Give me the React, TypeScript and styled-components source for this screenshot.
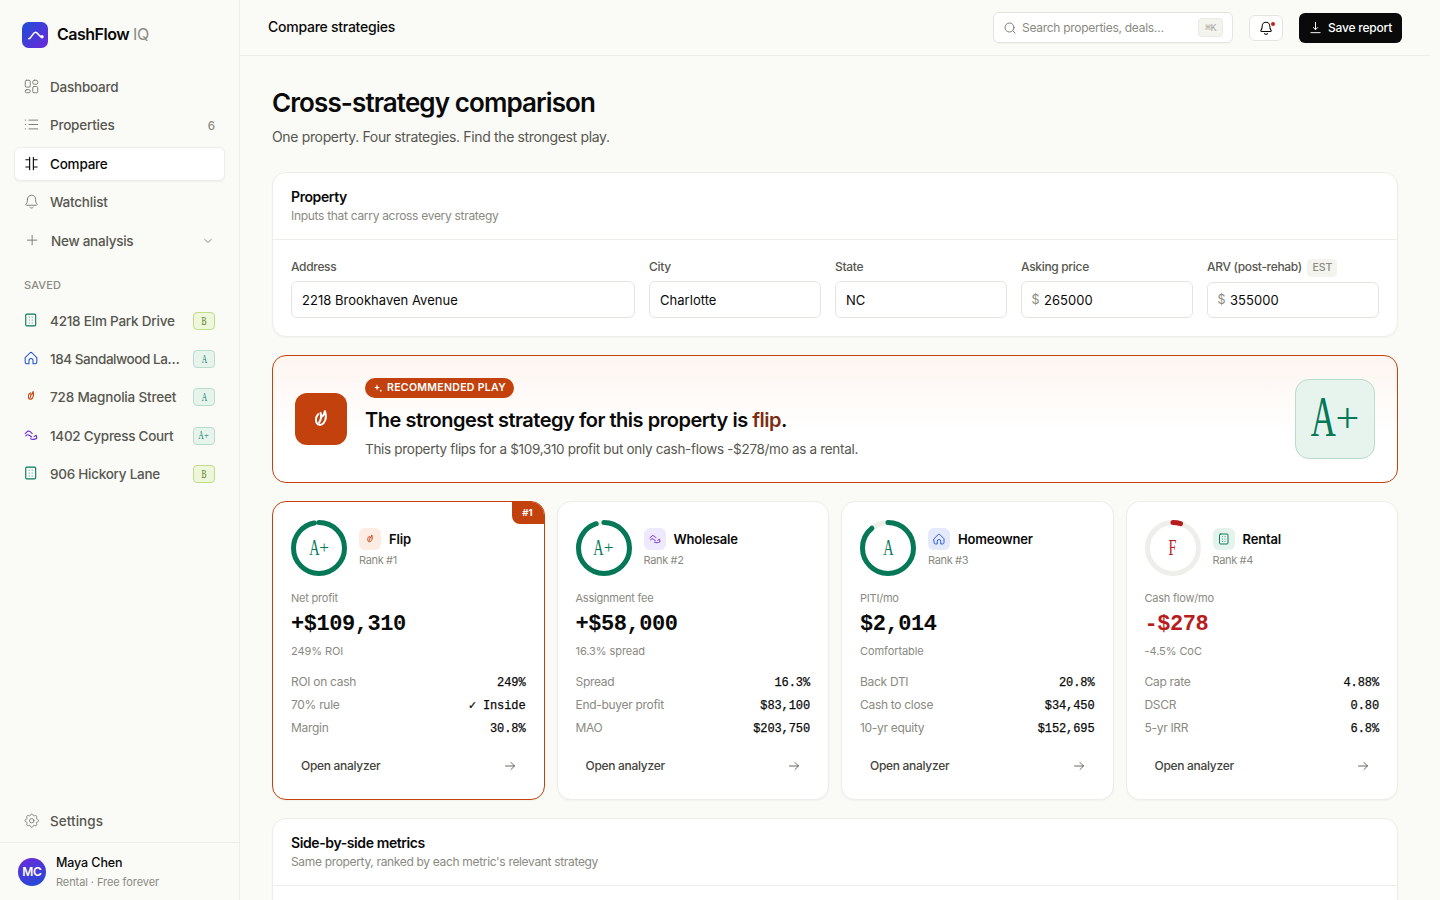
import React from "react";
import styled, { createGlobalStyle } from "styled-components";

const sans = `Inter, "Liberation Sans", sans-serif`;
const mono = `"Liberation Mono", monospace`;
const serif = `"Liberation Serif", serif`;

const c = {
  bg: "#fafaf7",
  ink: "#0a0a0a",
  mid: "#57574f",
  soft: "#8a8a82",
  line: "#ededea",
  field: "#e5e5e0",
  green: "#047857",
  red: "#b91c1c",
  orange: "#c2410c",
  purple: "#6d28d9",
  blue: "#1d4ed8",
};

const Global = createGlobalStyle`
  * { box-sizing: border-box; }
  html, body { margin: 0; padding: 0; }
  body {
    font-family: ${sans};
    color: ${c.ink};
    background: ${c.bg};
    height: 900px;
    overflow: hidden;
  }
  svg { display: block; flex: none; }
`;

const Text = styled.span<{ $size: number; $weight?: number; $color?: string; $ls?: number; $lh?: number }>`
  display: block;
  white-space: nowrap;
  font-size: ${(p) => p.$size}px;
  font-weight: ${(p) => p.$weight ?? 400};
  color: ${(p) => p.$color ?? c.ink};
  letter-spacing: ${(p) => p.$ls ?? 0}px;
  line-height: ${(p) => p.$lh ?? 20}px;
`;

/* ---------- icons ---------- */

type IconProps = { size: number; width?: number; color?: string; children: React.ReactNode };
const Icon = ({ size, width = 1.5, color = "currentColor", children }: IconProps) => (
  <svg width={size} height={size} viewBox="0 0 24 24" fill="none" stroke={color} strokeWidth={width} strokeLinecap="round" strokeLinejoin="round">
    {children}
  </svg>
);

const DashboardIcon = () => (
  <Icon size={15}>
    <rect x="2" y="2" width="8" height="11" rx="2" />
    <rect x="14" y="2" width="8" height="6.5" rx="2.6" />
    <rect x="2" y="17" width="8" height="5" rx="2.4" />
    <rect x="14" y="12" width="8" height="10" rx="2" />
  </Icon>
);
const ListIcon = () => (
  <Icon size={15}>
    <path d="M8 5h14M8 12h14M8 19h14M2 5h.5M2 12h.5M2 19h.5" />
  </Icon>
);
const CompareIcon = () => (
  <Icon size={15} width={1.8}>
    <path d="M9 2v20M15 2v20M3 6h6M3 17.500h6M15 6h6M15 17.500h6" />
  </Icon>
);
const BellIcon = ({ size = 15, width = 1.5 }: { size?: number; width?: number }) => (
  <Icon size={size} width={width}>
    <path d="M5.500 8.500a6.500 6.500 0 0 1 13 0c0 4.500.8 5.700 2 7.200.9 1.200.4 2.300-1 2.300h-15c-1.400 0-1.900-1.100-1-2.300 1.200-1.500 2-2.700 2-7.200Z" />
    <path d="M9.500 21.500c1.400 1.300 3.600 1.300 5 0" />
  </Icon>
);
const PlusIcon = () => (
  <Icon size={15}>
    <path d="M13 5.500v15M5.500 13h15" />
  </Icon>
);
const ChevronIcon = () => (
  <Icon size={10} width={2}>
    <path d="m4 8 8 7.500L20 8" />
  </Icon>
);
const GearIcon = () => (
  <Icon size={15.5} width={1.4}>
    <circle cx="12" cy="12" r="3.400" />
    <path d="M10.200 2.600a2 2 0 0 1 3.600 0l.5 1.100a1.300 1.300 0 0 0 1.700.7l1.100-.4a2 2 0 0 1 2.600 2.600l-.4 1.100a1.300 1.300 0 0 0 .7 1.700l1.100.5a2 2 0 0 1 0 3.800l-1.100.5a1.300 1.300 0 0 0-.7 1.700l.4 1.100a2 2 0 0 1-2.600 2.600l-1.100-.4a1.300 1.300 0 0 0-1.700.7l-.5 1.100a2 2 0 0 1-3.600 0l-.5-1.100a1.300 1.300 0 0 0-1.700-.7l-1.100.4a2 2 0 0 1-2.600-2.600l.4-1.100a1.300 1.300 0 0 0-.7-1.700l-1.100-.5a2 2 0 0 1 0-3.800l1.100-.5a1.300 1.300 0 0 0 .7-1.700l-.4-1.100a2 2 0 0 1 2.600-2.600l1.100.4a1.300 1.300 0 0 0 1.700-.7Z" />
  </Icon>
);
const SearchIcon = () => (
  <Icon size={12} width={1.9}>
    <circle cx="11" cy="11" r="9" />
    <path d="m17.700 17.700 4.500 4.500" />
  </Icon>
);
const DownloadIcon = () => (
  <Icon size={13} width={1.8}>
    <path d="M12 2.500v13M8 12l4 4 4-4M3.500 21.500h17" />
  </Icon>
);
const ArrowIcon = () => (
  <Icon size={12} width={1.6}>
    <path d="M3 12h18M14 5l7 7-7 7" />
  </Icon>
);
const BuildingIcon = ({ size }: { size: number }) => (
  <Icon size={size} width={1.9} color={c.green}>
    <rect x="3" y="2" width="17" height="20" rx="2" />
    <path strokeWidth="1.300" d="M9 7v.3M14 7v.3M9 12v.3M14 12v.3M9 17v.3M14 17v.3" />
  </Icon>
);
const HomeIcon = ({ size }: { size: number }) => (
  <Icon size={size} width={1.8} color={c.blue}>
    <path d="M2 11.500 10.500 3a2.200 2.200 0 0 1 3 0L22 11.500V19a3 3 0 0 1-3 3h-3.500v-5.500a3.500 3.500 0 0 0-7 0V22H5a3 3 0 0 1-3-3Z" />
  </Icon>
);
const FlameIcon = ({ size, color = c.orange }: { size: number; color?: string }) => (
  <Icon size={size} width={1.9} color={color}>
    <path d="M9.500 7.500C7.600 9.500 7 13 7.800 15.400c1.300 2.800 4.900 2.900 7-.2 2.200-3.300 2-7 .9-10.400" />
    <path d="M15.500 5c-.3 2-1 3.500-2.200 4.500" />
    <path d="M11.600 6.500c1 3 .5 6-1.400 9" />
  </Icon>
);
const DealIcon = ({ size }: { size: number }) => (
  <Icon size={size} width={1.9} color={c.purple}>
    <path d="M2 9.500 7 5l4 1.500 3 3M3 13.500c2-2 4-2.500 6-1l4 3M11 18.500c3.500 1.500 7 1.500 11-1l-1-5-3.500 2" />
  </Icon>
);
const SparkIcon = () => (
  <svg width="10" height="10" viewBox="0 0 10 10" fill="#fff">
    <path d="M4 1.300 4.800 3.700 7 4.500 4.800 5.300 4 7.500 3.200 5.300 1 4.500 3.200 3.700Z" />
    <circle cx="7.700" cy="7.700" r=".9" />
  </svg>
);

const strategyIcon = {
  rental: (s: number) => <BuildingIcon size={s} />,
  home: (s: number) => <HomeIcon size={s} />,
  flip: (s: number) => <FlameIcon size={s} />,
  deal: (s: number) => <DealIcon size={s} />,
};
type Kind = keyof typeof strategyIcon;

/* ---------- shell ---------- */

const Shell = styled.div`
  display: grid;
  grid-template-columns: 240px 1190px;
  height: 900px;
  overflow: hidden;
`;
const Sidebar = styled.aside`
  display: flex;
  flex-direction: column;
  border-right: 1px solid ${c.line};
  padding-top: 22px;
  height: 900px;
`;
const Brand = styled.div`
  display: flex;
  align-items: center;
  gap: 9px;
  height: 26px;
  padding-left: 22px;
  margin-bottom: 22.500px;
`;
const Wordmark = styled.div`
  display: flex;
  gap: 4px;
  padding-bottom: 2px;
`;
const Nav = styled.nav`
  display: flex;
  flex-direction: column;
  gap: 4px;
  padding: 0 14px;
`;
const NavRow = styled.div<{ $active?: boolean }>`
  display: flex;
  align-items: center;
  height: 34.250px;
  padding: 0 9px;
  border-radius: 6px;
  color: ${(p) => (p.$active ? c.ink : "#7a7a72")};
  background: ${(p) => (p.$active ? "#fff" : "transparent")};
  border: 1px solid ${(p) => (p.$active ? c.line : "transparent")};
  box-shadow: ${(p) => (p.$active ? "0 1px 2px rgba(0,0,0,.05)" : "none")};
`;
const IconSlot = styled.div<{ $w?: number }>`
  width: ${(p) => p.$w ?? 26}px;
  padding-bottom: 2px;
`;
const Grow = styled.div`
  flex: 1;
  min-width: 0;
`;
const ChevronSlot = styled.div`
  padding-right: 2px;
`;
const SavedLabel = styled.div`
  padding: 17px 24px 9px;
`;
const gradeTone = {
  A: { fg: c.green, bg: "#e7f4ee", line: "#b9dccd" },
  B: { fg: "#4d7c0f", bg: "#eef6dc", line: "#bfdc86" },
};
const MiniGrade = styled.div<{ $tone: "A" | "B" }>`
  display: flex;
  align-items: center;
  justify-content: center;
  width: 22px;
  height: 18px;
  border-radius: 4px;
  border: 1px solid ${(p) => gradeTone[p.$tone].line};
  background: ${(p) => gradeTone[p.$tone].bg};
  color: ${(p) => gradeTone[p.$tone].fg};
`;
const GradeMark = styled.span<{ $size: number }>`
  display: flex;
  align-items: baseline;
  justify-content: center;
  font-family: ${serif};
  font-size: ${(p) => p.$size}px;
  line-height: 1;
  padding-bottom: 0.06em;
`;
const GradeLetter = styled.span`
  display: block;
  margin: 0 -0.14em;
  transform: scaleX(0.62);
`;
const GradeSign = styled.span`
  display: block;
  font-size: 0.75em;
  line-height: 1;
  transform: translateY(-0.1em);
`;
const Grade = ({ value, size }: { value: string; size: number }) => (
  <GradeMark $size={size}>
    <GradeLetter>{value[0]}</GradeLetter>
    {value[1] && <GradeSign>{value[1]}</GradeSign>}
  </GradeMark>
);
const SettingsNav = styled(Nav)`
  margin-top: auto;
  margin-bottom: 3.5px;
`;
const Account = styled.div`
  display: flex;
  align-items: center;
  gap: 10px;
  height: 58px;
  border-top: 1px solid ${c.line};
  padding-left: 18px;
`;
const Avatar = styled.div`
  display: flex;
  align-items: center;
  justify-content: center;
  width: 28px;
  height: 28px;
  border-radius: 50%;
  background: linear-gradient(160deg, #6d28d9, #1d4ed8);
`;
const AccountCopy = styled.div`
  display: flex;
  flex-direction: column;
  padding-top: 2px;
`;

/* ---------- header ---------- */

const Main = styled.main`
  display: flex;
  flex-direction: column;
  height: 900px;
  overflow: hidden;
`;
const Header = styled.header`
  display: flex;
  align-items: center;
  flex: none;
  gap: 16px;
  height: 56px;
  border-bottom: 1px solid ${c.line};
  padding: 0 28px;
`;
const HeaderTitle = styled.div`
  flex: 1;
  padding-bottom: 2px;
`;
const Search = styled.div`
  display: flex;
  align-items: center;
  gap: 6px;
  width: 240px;
  height: 31px;
  padding: 0 9px 0 10px;
  border: 1px solid ${c.field};
  border-radius: 6px;
  background: #fff;
  color: #77776f;
  box-shadow: 0 1px 1px rgba(0, 0, 0, 0.03);
`;
const Key = styled.div`
  display: flex;
  align-items: center;
  justify-content: center;
  width: 25px;
  height: 19px;
  border: 1px solid #ebebe5;
  border-radius: 4px;
  background: #f4f4ef;
  font: 10px ${mono};
  letter-spacing: -0.4px;
  color: #a9a9a0;
`;
const BellButton = styled.div`
  position: relative;
  display: flex;
  align-items: center;
  justify-content: center;
  width: 34px;
  height: 26px;
  border: 1px solid ${c.field};
  border-radius: 6px;
  background: #fff;
`;
const Dot = styled.i`
  position: absolute;
  right: 7px;
  top: 6px;
  width: 4px;
  height: 4px;
  border-radius: 50%;
  background: #c81e1e;
`;
const SaveButton = styled.div`
  display: flex;
  align-items: center;
  gap: 6px;
  width: 103px;
  height: 30px;
  padding-left: 10px;
  border-radius: 6px;
  background: ${c.ink};
  color: #fff;
`;

/* ---------- content ---------- */

const Content = styled.div`
  display: flex;
  flex-direction: column;
  padding: 30px 32px 0;
`;
const PageHead = styled.div`
  display: flex;
  flex-direction: column;
  height: 86px;
`;
const Card = styled.section`
  flex: none;
  border: 1px solid ${c.line};
  border-radius: 14px;
  background: #fff;
  box-shadow: 0 1px 2px rgba(0, 0, 0, 0.04);
`;
const CardHead = styled.div`
  height: 67px;
  padding: 14px 18px 0;
  border-bottom: 1px solid ${c.line};
`;
const Fields = styled.div`
  display: grid;
  grid-template-columns: 2fr repeat(4, 1fr);
  gap: 14px;
  padding: 18px;
`;
const Field = styled.div`
  display: flex;
  flex-direction: column;
  justify-content: space-between;
  height: 60px;
`;
const FieldLabel = styled.div`
  display: flex;
  gap: 5.5px;
  height: 18px;
`;
const Est = styled.div`
  display: flex;
  align-items: center;
  justify-content: center;
  width: 30px;
  height: 18px;
  margin-top: 1px;
  border-radius: 4px;
  background: #f4f4ef;
`;
const Input = styled.div<{ $money?: boolean; $short?: boolean }>`
  display: flex;
  align-items: center;
  gap: 5px;
  height: ${(p) => (p.$short ? 36 : 37)}px;
  padding: 0 10px 0 ${(p) => (p.$money ? 9.5 : 10)}px;
  border: 1px solid ${c.field};
  border-radius: 6px;
`;
const Banner = styled.section`
  display: flex;
  align-items: center;
  flex: none;
  height: 128px;
  margin: 18px 0;
  padding: 0 22px;
  border: 1px solid ${c.orange};
  border-radius: 14px;
  background: linear-gradient(180deg, #fdf5f0 0%, #fff 60%);
`;
const BannerIcon = styled.div`
  display: flex;
  align-items: center;
  justify-content: center;
  width: 52px;
  height: 52px;
  margin-right: 18px;
  border-radius: 12px;
  background: ${c.orange};
`;
const BannerCopy = styled.div`
  display: flex;
  flex-direction: column;
  flex: 1;
  height: 82px;
`;
const Pill = styled.div`
  display: flex;
  align-items: center;
  gap: 4px;
  width: 149px;
  height: 20px;
  padding-left: 8px;
  margin-bottom: 9px;
  border-radius: 10px;
  background: ${c.orange};
`;
const BigGrade = styled.div`
  display: flex;
  align-items: center;
  justify-content: center;
  width: 80px;
  height: 80px;
  border: 1px solid #b9dccd;
  border-radius: 14px;
  background: #e7f4ee;
  color: ${c.green};
`;
const Accent = styled.span`
  color: #7c2d12;
`;
const Strategies = styled.div`
  display: grid;
  grid-template-columns: repeat(4, 1fr);
  gap: 12px;
  margin-bottom: 18px;
`;
const StrategyCard = styled(Card)<{ $best: boolean }>`
  position: relative;
  overflow: hidden;
  height: 299px;
  padding: 18px;
  border-color: ${(p) => (p.$best ? c.orange : c.line)};
`;
const RankFlag = styled.div`
  position: absolute;
  top: 0;
  right: 0;
  display: flex;
  align-items: center;
  justify-content: center;
  width: 32px;
  height: 22px;
  border-bottom-left-radius: 8px;
  background: ${c.orange};
`;
const Top = styled.div`
  display: flex;
  align-items: center;
  gap: 12px;
  height: 56px;
`;
const Identity = styled.div`
  display: flex;
  flex-direction: column;
  padding-top: 2px;
`;
const RingBox = styled.div<{ $color: string }>`
  display: grid;
  place-items: center;
  width: 56px;
  height: 56px;
  color: ${(p) => p.$color};
  > * {
    grid-area: 1 / 1;
  }
`;
const NameRow = styled.div`
  display: flex;
  align-items: center;
  gap: 8px;
  height: 22px;
`;
const Chip = styled.div<{ $bg: string }>`
  display: flex;
  align-items: center;
  justify-content: center;
  width: 22px;
  height: 22px;
  border-radius: 6px;
  background: ${(p) => p.$bg};
`;
const Headline = styled.div`
  margin-top: 12px;
  height: 76px;
`;
const Value = styled.div<{ $neg: boolean }>`
  font: 700 22px/34px ${mono};
  letter-spacing: -0.44px;
  color: ${(p) => (p.$neg ? c.red : c.ink)};
`;
const Stats = styled.div`
  display: flex;
  flex-direction: column;
  margin-top: 6px;
`;
const StatRow = styled.div`
  display: flex;
  align-items: center;
  justify-content: space-between;
  height: 23px;
`;
const StatValue = styled.span`
  padding-top: 2px;
  font: 12px/20px ${mono};
  letter-spacing: -0.1px;
  -webkit-text-stroke: 0.25px ${c.ink};
  white-space: pre;
`;
const OpenRow = styled.div`
  display: flex;
  align-items: center;
  justify-content: space-between;
  height: 30px;
  margin-top: 12px;
  padding: 0 10px;
  color: #44443e;
`;

const Ring = ({ grade, pct, color }: { grade: string; pct: number; color: string }) => {
  const r = 25.5;
  const len = 2 * Math.PI * r;
  return (
    <RingBox $color={color}>
      <svg width="56" height="56" viewBox="0 0 56 56" fill="none" strokeWidth="5">
        <circle cx="28" cy="28" r={r} stroke="#eeeeea" />
        <circle cx="28" cy="28" r={r} stroke={color} strokeLinecap="round" strokeDasharray={`${len * pct} ${len}`} transform="rotate(-90 28 28)" />
      </svg>
      <Grade value={grade} size={23} />
    </RingBox>
  );
};

const saved: { name: string; kind: Kind; grade: string; tone: "A" | "B"; ls: number }[] = [
  { name: "4218 Elm Park Drive", kind: "rental", grade: "B", tone: "B", ls: -0.22 },
  { name: "184 Sandalwood La…", kind: "home", grade: "A", tone: "A", ls: -0.44 },
  { name: "728 Magnolia Street", kind: "flip", grade: "A", tone: "A", ls: -0.18 },
  { name: "1402 Cypress Court", kind: "deal", grade: "A+", tone: "A", ls: -0.28 },
  { name: "906 Hickory Lane", kind: "rental", grade: "B", tone: "B", ls: -0.26 },
];

const nav: { name: string; icon: React.ReactNode; active?: boolean; count?: string }[] = [
  { name: "Dashboard", icon: <DashboardIcon /> },
  { name: "Properties", icon: <ListIcon />, count: "6" },
  { name: "Compare", icon: <CompareIcon />, active: true },
  { name: "Watchlist", icon: <BellIcon /> },
];

const strategies: {
  name: string; kind: Kind; chip: string; grade: string; pct: number; color: string;
  label: string; value: string; note: string; stats: [string, string][];
}[] = [
  { name: "Flip", kind: "flip", chip: "#fdece3", grade: "A+", pct: 0.963, color: c.green, label: "Net profit", value: "+$109,310", note: "249% ROI", stats: [["ROI on cash", "249%"], ["70% rule", "✓ Inside"], ["Margin", "30.8%"]] },
  { name: "Wholesale", kind: "deal", chip: "#eee9fc", grade: "A+", pct: 0.944, color: c.green, label: "Assignment fee", value: "+$58,000", note: "16.3% spread", stats: [["Spread", "16.3%"], ["End-buyer profit", "$83,100"], ["MAO", "$203,750"]] },
  { name: "Homeowner", kind: "home", chip: "#e4eafb", grade: "A", pct: 0.885, color: c.green, label: "PITI/mo", value: "$2,014", note: "Comfortable", stats: [["Back DTI", "20.8%"], ["Cash to close", "$34,450"], ["10-yr equity", "$152,695"]] },
  { name: "Rental", kind: "rental", chip: "#e5f3ed", grade: "F", pct: 0.048, color: c.red, label: "Cash flow/mo", value: "-$278", note: "-4.5% CoC", stats: [["Cap rate", "4.88%"], ["DSCR", "0.80"], ["5-yr IRR", "6.8%"]] },
];

const fields: { label: string; value: string; money?: boolean; est?: boolean }[] = [
  { label: "Address", value: "2218 Brookhaven Avenue" },
  { label: "City", value: "Charlotte" },
  { label: "State", value: "NC" },
  { label: "Asking price", value: "265000", money: true },
  { label: "ARV (post-rehab)", value: "355000", money: true, est: true },
];

export default function App() {
  return (
    <>
      <Global />
      <Shell>
        <Sidebar>
          <Brand>
            <svg width="26" height="26" viewBox="0 0 26 26" fill="none">
              <defs>
                <linearGradient id="brand" x1="0" y1="0" x2="1" y2="1">
                  <stop stopColor="#1d4ed8" />
                  <stop offset="1" stopColor="#6d28d9" />
                </linearGradient>
              </defs>
              <rect width="26" height="26" rx="6.500" fill="url(#brand)" />
              <path d="M6.700 16.700c3 0 3.600-6.500 6.800-6.500 2.600 0 3 4.600 6.500 4.600" stroke="#fff" strokeWidth="1.500" strokeLinecap="round" />
              <circle cx="20" cy="14.800" r="1.700" fill="#fff" />
            </svg>
            <Wordmark>
              <Text $size={16} $weight={600} $ls={-0.5}>CashFlow</Text>
              <Text $size={16} $color={c.soft} $ls={-0.3}>IQ</Text>
            </Wordmark>
          </Brand>
          <Nav>
            {nav.map((n) => (
              <NavRow key={n.name} $active={n.active}>
                <IconSlot>{n.icon}</IconSlot>
                <Grow>
                  <Text $size={13.5} $weight={500} $lh={19} $ls={-0.22} $color={n.active ? c.ink : c.mid}>{n.name}</Text>
                </Grow>
                {n.count && <Text $size={11.5} $weight={500} $color={c.soft}>{n.count}</Text>}
              </NavRow>
            ))}
            <NavRow>
              <IconSlot $w={27}><PlusIcon /></IconSlot>
              <Grow>
                <Text $size={13.5} $weight={500} $ls={-0.25} $color={c.mid}>New analysis</Text>
              </Grow>
              <ChevronSlot><ChevronIcon /></ChevronSlot>
            </NavRow>
          </Nav>
          <SavedLabel>
            <Text $size={11} $weight={500} $color={c.soft} $ls={0.1}>SAVED</Text>
          </SavedLabel>
          <Nav>
            {saved.map((s) => (
              <NavRow key={s.name}>
                <IconSlot>{strategyIcon[s.kind](14)}</IconSlot>
                <Grow>
                  <Text $size={13.5} $weight={500} $color={c.mid} $ls={s.ls}>{s.name}</Text>
                </Grow>
                <MiniGrade $tone={s.tone}><Grade value={s.grade} size={s.grade.length > 1 ? 11.5 : 12} /></MiniGrade>
              </NavRow>
            ))}
          </Nav>
          <SettingsNav>
            <NavRow>
              <IconSlot><GearIcon /></IconSlot>
              <Text $size={13.5} $weight={500} $color={c.mid} $ls={0.05}>Settings</Text>
            </NavRow>
          </SettingsNav>
          <Account>
            <Avatar><Text $size={12} $weight={600} $color="#fff" $ls={-0.2}>MC</Text></Avatar>
            <AccountCopy>
              <Text $size={12.5} $weight={500} $ls={-0.1}>Maya Chen</Text>
              <Text $size={11} $color={c.soft} $ls={-0.08} $lh={19}>Rental · Free forever</Text>
            </AccountCopy>
          </Account>
        </Sidebar>
        <Main>
          <Header>
            <HeaderTitle>
              <Text $size={14} $weight={500} $ls={-0.25}>Compare strategies</Text>
            </HeaderTitle>
            <Search>
              <SearchIcon />
              <Grow><Text $size={12} $color={c.soft} $ls={-0.28}>Search properties, deals…</Text></Grow>
              <Key>⌘K</Key>
            </Search>
            <BellButton><BellIcon size={14} width={1.8} /><Dot /></BellButton>
            <SaveButton><DownloadIcon /><Text $size={12} $weight={500} $color="#fff" $ls={-0.2}>Save report</Text></SaveButton>
          </Header>
          <Content>
            <PageHead>
              <Text $size={26} $weight={600} $ls={-0.9} $lh={34}>Cross-strategy comparison</Text>
              <Text $size={14} $color={c.mid} $ls={-0.35} $lh={34}>One property. Four strategies. Find the strongest play.</Text>
            </PageHead>
            <Card>
              <CardHead>
                <Text $size={14} $weight={600} $ls={-0.4} $lh={20}>Property</Text>
                <Text $size={12} $color={c.soft} $ls={-0.3} $lh={18}>Inputs that carry across every strategy</Text>
              </CardHead>
              <Fields>
                {fields.map((f) => (
                  <Field key={f.label}>
                    <FieldLabel>
                      <Text $size={12} $weight={500} $color={c.mid} $ls={-0.32} $lh={18}>{f.label}</Text>
                      {f.est && <Est><Text $size={10.5} $weight={500} $color={c.soft}>EST</Text></Est>}
                    </FieldLabel>
                    <Input $money={f.money} $short={f.est}>
                      {f.money && <Text $size={12.5} $color={c.soft} $ls={-0.5}>$</Text>}
                      <Text $size={13} $ls={0.03}>{f.value}</Text>
                    </Input>
                  </Field>
                ))}
              </Fields>
            </Card>
            <Banner>
              <BannerIcon><FlameIcon size={26} color="#fff" /></BannerIcon>
              <BannerCopy>
                <Pill><SparkIcon /><Text $size={10.5} $weight={600} $color="#fff" $ls={0.32}>RECOMMENDED PLAY</Text></Pill>
                <Text $size={20} $weight={600} $ls={-0.48} $lh={26}>The strongest strategy for this property is <Accent>flip</Accent>.</Text>
                <Text $size={13.5} $color={c.mid} $ls={-0.31} $lh={32}>This property flips for a $109,310 profit but only cash-flows -$278/mo as a rental.</Text>
              </BannerCopy>
              <BigGrade><Grade value="A+" size={56} /></BigGrade>
            </Banner>
            <Strategies>
              {strategies.map((s, i) => (
                <StrategyCard key={s.name} $best={i === 0}>
                  {i === 0 && <RankFlag><Text $size={9.5} $weight={700} $color="#fff">#1</Text></RankFlag>}
                  <Top>
                    <Ring grade={s.grade} pct={s.pct} color={s.color} />
                    <Identity>
                      <NameRow>
                        <Chip $bg={s.chip}>{strategyIcon[s.kind](12)}</Chip>
                        <Text $size={13} $weight={600} $ls={-0.18}>{s.name}</Text>
                      </NameRow>
                      <Text $size={11} $color={c.soft} $ls={-0.35}>Rank #{i + 1}</Text>
                    </Identity>
                  </Top>
                  <Headline>
                    <Text $size={11} $color={c.soft} $ls={-0.22}>{s.label}</Text>
                    <Value $neg={s.value.startsWith("-")}>{s.value}</Value>
                    <Text $size={11} $color={c.soft} $ls={-0.08} $lh={18}>{s.note}</Text>
                  </Headline>
                  <Stats>
                    {s.stats.map(([k, v]) => (
                      <StatRow key={k}>
                        <Text $size={12} $color={c.soft} $ls={-0.3}>{k}</Text>
                        <StatValue>{v}</StatValue>
                      </StatRow>
                    ))}
                  </Stats>
                  <OpenRow>
                    <Text $size={12} $weight={500} $color="#44443e" $ls={-0.3}>Open analyzer</Text>
                    <ArrowIcon />
                  </OpenRow>
                </StrategyCard>
              ))}
            </Strategies>
            <Card>
              <CardHead>
                <Text $size={14} $weight={600} $ls={-0.4} $lh={20}>Side-by-side metrics</Text>
                <Text $size={12} $color={c.soft} $ls={-0.33} $lh={18}>Same property, ranked by each metric's relevant strategy</Text>
              </CardHead>
              <Fields />
            </Card>
          </Content>
        </Main>
      </Shell>
    </>
  );
}
